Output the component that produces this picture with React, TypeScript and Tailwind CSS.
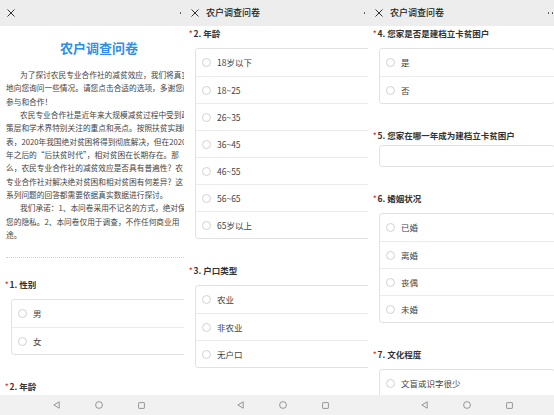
import type { ReactNode } from 'react'

const intro: { text: string; indent?: boolean }[] = [
  { text: '为了探讨农民专业合作社的减贫效应，我们将真实', indent: true },
  { text: '地向您询问一些情况。请您点击合适的选项，多谢您的' },
  { text: '参与和合作！' },
  { text: '农民专业合作社是近年来大规模减贫过程中受到政', indent: true },
  { text: '策层和学术界特别关注的重点和亮点。按照扶贫实践时间' },
  { text: '表，2020年我国绝对贫困将得到彻底解决，但在2020' },
  { text: '年之后的“后扶贫时代”，相对贫困在长期存在。那' },
  { text: '么，农民专业合作社的减贫效应是否具有普遍性？农' },
  { text: '专业合作社对解决绝对贫困和相对贫困有何差异？这' },
  { text: '系列问题的回答都需要依据真实数据进行探讨。' },
  { text: '我们承诺：1、本问卷采用不记名的方式，绝对保', indent: true },
  { text: '您的隐私。2、本问卷仅用于调查，不作任何商业用' },
  { text: '途。' },
]

function CloseIcon() {
  return (
    <svg width="8" height="8" viewBox="0 0 8 8" className="shrink-0">
      <path d="M0.5 0.5 L7.5 7.5 M7.5 0.5 L0.5 7.5" stroke="#333" strokeWidth="1" fill="none" />
    </svg>
  )
}

function TopBar({ title }: { title?: string }) {
  return (
    <div className="h-[26px] shrink-0 bg-[#ededed] flex items-center pl-[7px] pr-[9px]">
      <CloseIcon />
      {title && <span className="ml-[7px] text-[9px] font-medium text-[#222]">{title}</span>}
      <div className="ml-auto flex items-center gap-[2.5px]">
        <span className="w-[1.5px] h-[1.5px] rounded-full bg-[#444]" />
        <span className="w-[1.5px] h-[1.5px] rounded-full bg-[#444]" />
        <span className="w-[1.5px] h-[1.5px] rounded-full bg-[#444]" />
      </div>
    </div>
  )
}

function NavBar() {
  return (
    <div className="h-[20px] shrink-0 bg-[#f1f1f1] flex items-center justify-center gap-[35px]">
      <svg width="7" height="8" viewBox="0 0 7 8">
        <path d="M6.2 0.8 L6.2 7.2 L0.8 4 Z" stroke="#8a8a8a" strokeWidth="0.9" fill="none" strokeLinejoin="round" />
      </svg>
      <svg width="8" height="8" viewBox="0 0 8 8">
        <circle cx="4" cy="4" r="3.4" stroke="#8a8a8a" strokeWidth="0.9" fill="none" />
      </svg>
      <svg width="7" height="7" viewBox="0 0 7 7">
        <rect x="0.6" y="0.6" width="5.8" height="5.8" rx="0.6" stroke="#8a8a8a" strokeWidth="0.9" fill="none" />
      </svg>
    </div>
  )
}

function Heading({ num, title }: { num: number; title: string }) {
  return (
    <div className="h-[12px] leading-[12px] pl-[5px] text-[8.5px] font-bold text-[#333] whitespace-nowrap">
      <span className="text-[#e0301e] text-[7px] mr-[1px] relative -top-[1px]">*</span>
      {num}. {title}
    </div>
  )
}

function Question({ num, title, options }: { num: number; title: string; options: string[] }) {
  return (
    <div className="mb-[25px]">
      <Heading num={num} title={title} />
      <div className="mt-[9px] mx-[11px] border border-[#e2e2e2] rounded-[3px]">
        {options.map((o, i) => (
          <div key={o} className={i ? 'h-[27px] flex items-center border-t border-[#ebebeb]' : 'h-[27px] flex items-center'}>
            <span className="ml-[6px] w-[9px] h-[9px] rounded-full border border-[#d2d2d2] bg-white shrink-0" />
            <span className="ml-[6px] text-[8.5px] text-[#444] whitespace-nowrap">{o}</span>
          </div>
        ))}
      </div>
    </div>
  )
}

function Phone({ width, title, children }: { width: string; title?: string; children: ReactNode }) {
  return (
    <div className={`${width} h-[415px] shrink-0 overflow-hidden bg-white`}>
      <div className="w-[198px] h-full flex flex-col">
        <TopBar title={title} />
        <div className="flex-1 min-h-0 overflow-hidden">{children}</div>
        <NavBar />
      </div>
    </div>
  )
}

export default function App() {
  return (
    <div className="w-[554px] h-[415px] flex overflow-hidden bg-white font-['Noto_Sans_CJK_SC','Noto_Sans',sans-serif]">
      <Phone width="w-[184px]">
        <div className="mt-[14px] text-center text-[13px] leading-[16px] font-bold text-[#2d8fe6]">农户调查问卷</div>
        <div className="mt-[12px] px-[6px] text-[7.7px] leading-[13.33px] text-[#444]">
          {intro.map((l, i) => (
            <div key={i} className={l.indent ? 'pl-[14px] whitespace-nowrap' : 'whitespace-nowrap'}>
              {l.text}
            </div>
          ))}
        </div>
        <div className="mt-[16px] mx-[6px] border-t border-dotted border-[#d0d0d0]" />
        <div className="mt-[20px]">
          <Question num={1} title="性别" options={['男', '女']} />
          <Heading num={2} title="年龄" />
        </div>
      </Phone>

      <Phone width="w-[184px]" title="农户调查问卷">
        <div className="pt-[1px]">
          <Question
            num={2}
            title="年龄"
            options={['18岁以下', '18~25', '26~35', '36~45', '46~55', '56~65', '65岁以上']}
          />
          <Question num={3} title="户口类型" options={['农业', '非农业', '无户口']} />
          <Heading num={4} title="您家是否是建档立卡贫困户" />
        </div>
      </Phone>

      <Phone width="w-[186px]" title="农户调查问卷">
        <div className="pt-[1px]">
          <Question num={4} title="您家是否是建档立卡贫困户" options={['是', '否']} />
          <div className="mb-[25px]">
            <Heading num={5} title="您家在哪一年成为建档立卡贫困户" />
            <div className="mt-[4px] mx-[11px] h-[22px] border border-[#e2e2e2] rounded-[3px]" />
          </div>
          <Question num={6} title="婚姻状况" options={['已婚', '离婚', '丧偶', '未婚']} />
          <Question num={7} title="文化程度" options={['文盲或识字很少', '小学']} />
        </div>
      </Phone>
    </div>
  )
}
